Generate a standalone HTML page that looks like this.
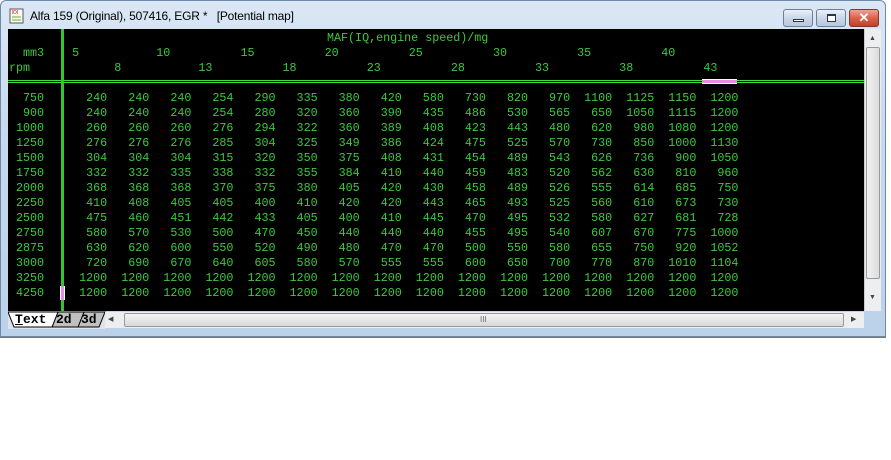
<!DOCTYPE html>
<html><head><meta charset="utf-8"><style>
*{margin:0;padding:0;box-sizing:border-box}
body{width:891px;height:460px;background:#fff;position:relative;overflow:hidden;font-family:"Liberation Sans",sans-serif}
#win{position:absolute;left:0;top:0;width:886px;height:337px;background:linear-gradient(#dbe7f5,#c7d9ee 40%,#bcd2ea);border:1px solid #6f8aa8;border-radius:6px 6px 0 0}
#title{position:absolute;left:29px;top:8px;font-size:12px;color:#000;letter-spacing:-0.2px}
.btn{position:absolute;top:8px;height:18px;border:1px solid #6d7f96;border-radius:3px;background:linear-gradient(#eaf1f9,#c9d7e8 50%,#b6c8de)}
#blk{position:absolute;left:8px;top:29px;width:856px;height:282px;background:#000}
pre{position:absolute;font-family:"Liberation Mono",monospace;font-size:11.7px;line-height:15px;color:#3ec83e;white-space:pre}
.hl{position:absolute;background:#3ee03e}
#vs{position:absolute;left:864px;top:29px;width:17px;height:282px;background:#eceef0;border-left:1px solid #ccc}
#hs{position:absolute;left:105px;top:312px;width:759px;height:16px;background:#eceef0}
.tab{position:absolute;top:312px;height:16px;font-family:"Liberation Mono",monospace;font-weight:bold;font-size:13px;line-height:16px;color:#000}
</style></head><body>
<div id="win">
 <svg style="position:absolute;left:8px;top:7px" width="16" height="16"><rect x="1" y="1" width="13" height="14" fill="#fffbe0" stroke="#556"/><rect x="2" y="2" width="11" height="4" fill="#fff"/><text x="2.5" y="6" font-size="5" fill="#c00" font-family="Liberation Sans">IOI</text><line x1="3" y1="9" x2="12" y2="9" stroke="#6a6"/><line x1="3" y1="12" x2="12" y2="12" stroke="#6a6"/></svg>
 <div id="title">Alfa 159 (Original), 507416, EGR *&nbsp;&nbsp; [Potential map]</div>
 <div class="btn" style="left:782px;width:30px"><div style="position:absolute;left:9px;top:9px;width:11px;height:3px;border:1px solid #334;background:#fff"></div></div>
 <div class="btn" style="left:815px;width:30px"><div style="position:absolute;left:10px;top:4px;width:9px;height:8px;border:1px solid #334;border-top-width:2px;background:#fff"></div></div>
 <div class="btn" style="left:848px;width:30px;background:linear-gradient(#eaa491,#d8644c 50%,#c2402a);border-color:#8a3325"><div style="position:absolute;left:0;width:28px;top:0;text-align:center;color:#fff;font-weight:bold;font-size:13px;line-height:16px">✕</div></div>
</div>
<div id="blk"></div>
<pre style="left:327px;top:31px">MAF(IQ,engine speed)/mg</pre>
<pre style="left:9px;top:46px">  mm3    5           10          15          20          25          30          35          40
rpm            8           13          18          23          28          33          38          43</pre>
<div class="hl" style="left:8px;top:80px;width:856px;height:1px"></div>
<div class="hl" style="left:8px;top:82px;width:856px;height:1px"></div>
<div class="hl" style="left:61px;top:29px;width:3px;height:282px;background:#2fc82f"></div>
<div style="position:absolute;left:702px;top:79px;width:35px;height:5px;background:#e58ee5;border-top:1px solid #fff;border-bottom:1px solid #fff"></div>
<div style="position:absolute;left:60px;top:286px;width:5px;height:14px;background:#e58ee5;border-left:1px solid #fff;border-right:1px solid #fff"></div>
<pre style="left:9px;top:91px">  750      240   240   240   254   290   335   380   420   580   730   820   970  1100  1125  1150  1200
  900      240   240   240   254   280   320   360   390   435   486   530   565   650  1050  1115  1200
 1000      260   260   260   276   294   322   360   389   408   423   443   480   620   980  1080  1200
 1250      276   276   276   285   304   325   349   386   424   475   525   570   730   850  1000  1130
 1500      304   304   304   315   320   350   375   408   431   454   489   543   626   736   900  1050
 1750      332   332   335   338   332   355   384   410   440   459   483   520   562   630   810   960
 2000      368   368   368   370   375   380   405   420   430   458   489   526   555   614   685   750
 2250      410   408   405   405   400   410   420   420   443   465   493   525   560   610   673   730
 2500      475   460   451   442   433   405   400   410   445   470   495   532   580   627   681   728
 2750      580   570   530   500   470   450   440   440   440   455   495   540   607   670   775  1000
 2875      630   620   600   550   520   490   480   470   470   500   550   580   655   750   920  1052
 3000      720   690   670   640   605   580   570   555   555   600   650   700   770   870  1010  1104
 3250     1200  1200  1200  1200  1200  1200  1200  1200  1200  1200  1200  1200  1200  1200  1200  1200
 4250     1200  1200  1200  1200  1200  1200  1200  1200  1200  1200  1200  1200  1200  1200  1200  1200</pre>
<div id="vs"><div style="position:absolute;left:1px;top:18px;width:14px;height:232px;border:1px solid #999;border-radius:2px;background:linear-gradient(90deg,#f2f2f2,#dcdcdc)"></div><div style="position:absolute;left:4px;top:6px;font-size:7px;color:#444">▲</div><div style="position:absolute;left:4px;top:265px;font-size:7px;color:#444">▼</div></div>
<div style="position:absolute;left:8px;top:311px;width:97px;height:18px;background:#dfe3e8"></div>
<svg style="position:absolute;left:8px;top:311px" width="98" height="18">
 <polygon points="76,1 97,1 91,16 70,16" fill="#c0c0c0" stroke="#000"/>
 <polygon points="50,1 76,1 70,16 44,16" fill="#c0c0c0" stroke="#000"/>
 <polygon points="0,1 50,1 44,16 6,16" fill="#fff" stroke="#000"/>
</svg>
<div class="tab" style="left:15px;text-decoration:underline;text-decoration-thickness:1px">T</div><div class="tab" style="left:23px">ext</div>
<div class="tab" style="left:56px">2d</div>
<div class="tab" style="left:81px">3d</div>
<div id="hs"><div style="position:absolute;left:3px;top:3px;font-size:7px;color:#444">◀</div><div style="position:absolute;left:19px;top:1px;width:720px;height:14px;border:1px solid #999;border-radius:2px;background:linear-gradient(#f4f4f4,#d8d8d8)"><div style="position:absolute;left:355px;top:1px;font-size:8px;color:#666">III</div></div><div style="position:absolute;left:746px;top:3px;font-size:7px;color:#444">▶</div></div>
<div style="position:absolute;left:0;top:337px;width:886px;height:1px;background:#777"></div>
</body></html>
